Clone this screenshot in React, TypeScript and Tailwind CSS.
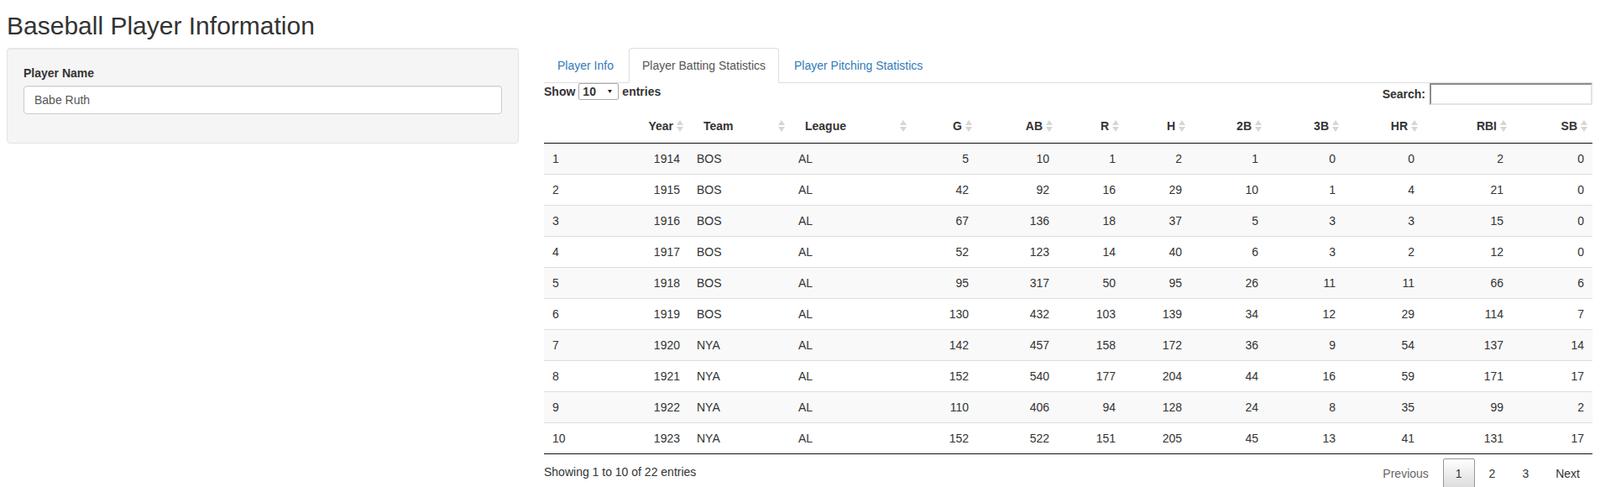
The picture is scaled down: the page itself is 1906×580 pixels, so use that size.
import React from "react";

type Col = {
  label: string;
  width: string;
  right: boolean;
  sort: boolean;
};

const cols: Col[] = [
  { label: "", width: "w-[72px]", right: false, sort: false },
  { label: "Year", width: "w-[100px]", right: true, sort: true },
  { label: "Team", width: "w-[121px]", right: false, sort: true },
  { label: "League", width: "w-[145px]", right: false, sort: true },
  { label: "G", width: "w-[78px]", right: true, sort: true },
  { label: "AB", width: "w-[96px]", right: true, sort: true },
  { label: "R", width: "w-[79px]", right: true, sort: true },
  { label: "H", width: "w-[79px]", right: true, sort: true },
  { label: "2B", width: "w-[91px]", right: true, sort: true },
  { label: "3B", width: "w-[92px]", right: true, sort: true },
  { label: "HR", width: "w-[94px]", right: true, sort: true },
  { label: "RBI", width: "w-[106px]", right: true, sort: true },
  { label: "SB", width: "w-[96px]", right: true, sort: true },
];

const rows: (string | number)[][] = [
  [1, 1914, "BOS", "AL", 5, 10, 1, 2, 1, 0, 0, 2, 0],
  [2, 1915, "BOS", "AL", 42, 92, 16, 29, 10, 1, 4, 21, 0],
  [3, 1916, "BOS", "AL", 67, 136, 18, 37, 5, 3, 3, 15, 0],
  [4, 1917, "BOS", "AL", 52, 123, 14, 40, 6, 3, 2, 12, 0],
  [5, 1918, "BOS", "AL", 95, 317, 50, 95, 26, 11, 11, 66, 6],
  [6, 1919, "BOS", "AL", 130, 432, 103, 139, 34, 12, 29, 114, 7],
  [7, 1920, "NYA", "AL", 142, 457, 158, 172, 36, 9, 54, 137, 14],
  [8, 1921, "NYA", "AL", 152, 540, 177, 204, 44, 16, 59, 171, 17],
  [9, 1922, "NYA", "AL", 110, 406, 94, 128, 24, 8, 35, 99, 2],
  [10, 1923, "NYA", "AL", 152, 522, 151, 205, 45, 13, 41, 131, 17],
];

function SortIcon() {
  return (
    <svg width="8" height="14" viewBox="0 0 8 14" className="shrink-0">
      <polygon points="0,6 4,0 8,6" fill="#d6d6d6" />
      <polygon points="0,8 8,8 4,14" fill="#d6d6d6" />
    </svg>
  );
}

function Tabs() {
  const tabs = ["Player Info", "Player Batting Statistics", "Player Pitching Statistics"];
  return (
    <ul className="flex border-b border-[#ddd]">
      {tabs.map((t, i) => (
        <li key={t} className="-mb-px mr-[2px]">
          <a
            className={
              i === 1
                ? "block px-[15px] py-[10px] leading-5 rounded-t-[4px] border border-[#ddd] border-b-transparent bg-white text-[#555]"
                : "block px-[15px] py-[10px] leading-5 rounded-t-[4px] border border-transparent text-[#337ab7]"
            }
          >
            {t}
          </a>
        </li>
      ))}
    </ul>
  );
}

function StatsTable() {
  return (
    <table className="w-full table-fixed border-separate border-spacing-0 mt-[5px] border-b border-[#111]">
      <colgroup>
        {cols.map((c, i) => (
          <col key={i} className={c.width} />
        ))}
      </colgroup>
      <thead>
        <tr>
          {cols.map((c, i) => (
            <th key={i} className="p-0 font-bold border-b border-[#111]">
              {c.sort ? (
                c.right ? (
                  <div className="flex items-center justify-end gap-[4px] pl-[18px] pr-[6px] py-[10px] leading-5">
                    <span>{c.label}</span>
                    <SortIcon />
                  </div>
                ) : (
                  <div className="flex items-center justify-between pl-[18px] pr-[6px] py-[10px] leading-5">
                    <span>{c.label}</span>
                    <SortIcon />
                  </div>
                )
              ) : (
                <div className="px-[18px] py-[10px] leading-5">&nbsp;</div>
              )}
            </th>
          ))}
        </tr>
      </thead>
      <tbody>
        {rows.map((r, ri) => (
          <tr key={ri} className={ri % 2 === 0 ? "bg-[#f9f9f9]" : "bg-white"}>
            {r.map((v, ci) => (
              <td
                key={ci}
                className={
                  (ri === 0 ? "" : "border-t border-[#ddd] ") +
                  (cols[ci].right ? "text-right " : "text-left ") +
                  "px-[10px] py-2 leading-5"
                }
              >
                {v}
              </td>
            ))}
          </tr>
        ))}
      </tbody>
    </table>
  );
}

export default function App() {
  return (
    <div className="w-[1906px] min-h-[580px] bg-white text-[#333] text-sm leading-5 font-['Liberation_Sans',Arial,sans-serif] pl-2 pr-[9px]">
      <h2 className="pt-[14px] mb-[10px] text-[30px] leading-[33px] font-normal">
        Baseball Player Information
      </h2>
      <div className="flex items-start gap-[30px]">
        {/* sidebar */}
        <div className="w-[610px] shrink-0 rounded-[4px] border border-[#e3e3e3] bg-[#f5f5f5] p-[19px] shadow-[inset_0_1px_1px_rgba(0,0,0,0.05)]">
          <div className="mb-[15px]">
            <label className="block font-bold mb-[5px] leading-5">Player Name</label>
            <input
              defaultValue="Babe Ruth"
              className="block w-full h-[34px] rounded-[4px] border border-[#ccc] bg-white px-3 py-[6px] text-[#555] leading-5 shadow-[inset_0_1px_1px_rgba(0,0,0,0.075)] outline-none"
            />
          </div>
        </div>

        {/* main panel */}
        <div className="w-[1249px] shrink-0">
          <Tabs />
          <div className="flex items-start justify-between">
            <label className="flex h-[20px] items-center font-bold">
              <span>Show</span>
              <span className="mx-1 flex h-[20px] w-[48px] items-center justify-between rounded-[2px] border border-[#a9a9a9] pl-[4px] pr-[7px]">
                <span>10</span>
                <svg width="5" height="4" viewBox="0 0 5 4">
                  <polygon points="0,0 5,0 2.5,4" fill="#222" />
                </svg>
              </span>
              <span>entries</span>
            </label>
            <label className="flex items-center font-bold">
              <span>Search:</span>
              <input className="ml-[5px] h-[26px] w-[194px] border-2 border-t-[#8d8d8d] border-l-[#8d8d8d] border-r-[#e3e3e3] border-b-[#e3e3e3] bg-white px-1 outline-none" />
            </label>
          </div>
          <StatsTable />
          <div className="flex items-start justify-between">
            <div className="pt-[11px] leading-5">Showing 1 to 10 of 22 entries</div>
            <div className="flex pt-[5px]">
              <span className="px-[14px] py-[7px] leading-5 border border-transparent text-[#666]">Previous</span>
              <span className="ml-[2px] px-[14px] py-[7px] leading-5 rounded-[2px] border border-[#979797] bg-linear-to-b from-white to-[#dcdcdc] text-[#333]">1</span>
              <span className="ml-[2px] px-[14px] py-[7px] leading-5 border border-transparent text-[#333]">2</span>
              <span className="ml-[2px] px-[14px] py-[7px] leading-5 border border-transparent text-[#333]">3</span>
              <span className="ml-[2px] px-[14px] py-[7px] leading-5 border border-transparent text-[#333]">Next</span>
            </div>
          </div>
        </div>
      </div>
    </div>
  );
}
